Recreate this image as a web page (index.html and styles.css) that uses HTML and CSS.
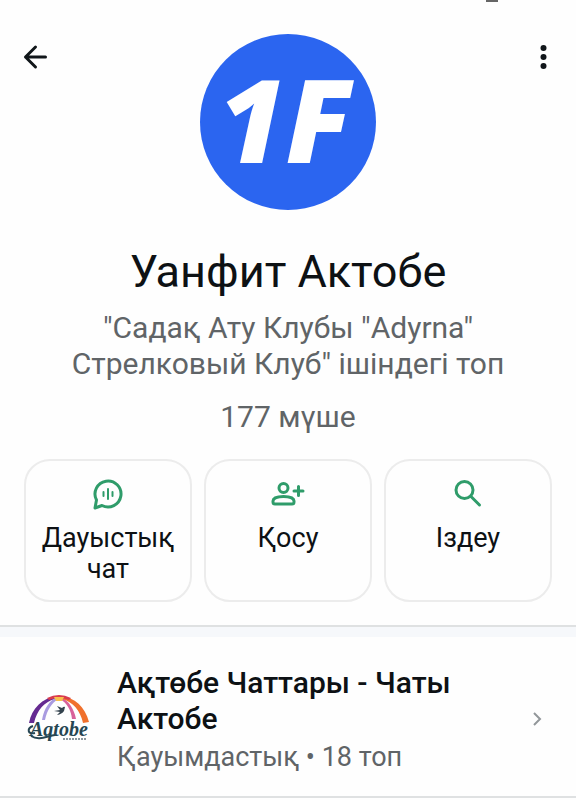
FILE: index.html
```
<!DOCTYPE html>
<html lang="kk">
<head>
<meta charset="UTF-8">
<meta name="viewport" content="width=device-width, initial-scale=1">
<title>Уанфит Актобе</title>
<link rel="stylesheet" href="styles.css">
</head>

<body>
  <!-- ============  Group info  ============ -->
  <section class="group">
    <header class="top-bar">
      <button type="button" class="icon-button" aria-label="Артқа">
        <svg width="28" height="28" viewBox="0 0 28 28" fill="none" stroke="#11161a" stroke-width="3" stroke-linecap="round" stroke-linejoin="round">
          <path d="M25.500 14H5.500M15.500 4L5.500 14l10 10"/>
        </svg>
      </button>

      <svg class="avatar" width="176" height="176" viewBox="0 0 176 176" role="img" aria-label="1F">
        <circle cx="88" cy="88" r="88" fill="#2b65f0"/>
        <text class="avatar-text" x="85" y="129" text-anchor="middle">1F</text>
      </svg>

      <button type="button" class="icon-button" aria-label="Мәзір">
        <svg width="28" height="28" viewBox="0 0 28 28" fill="#11161a">
          <circle cx="15.500" cy="5" r="3"/>
          <circle cx="15.500" cy="14" r="3"/>
          <circle cx="15.500" cy="23" r="3"/>
        </svg>
      </button>
    </header>

    <h1>Уанфит Актобе</h1>
    <p class="about">"Садақ Ату Клубы "Adyrna" Стрелковый Клуб" ішіндегі топ</p>
    <p class="members">177 мүше</p>

    <div class="actions">
      <button type="button" class="action">
        <svg width="34" height="34" viewBox="0 0 34 34" fill="none" stroke="#2f9c6a" stroke-width="3" stroke-linecap="round" stroke-linejoin="round">
          <path d="M4 31l1.500-8A13 13 0 1 1 11 28.500z"/>
          <path d="M12.500 15v4M17 12v10M21.500 15v4" stroke-width="2"/>
        </svg>
        <span>Дауыстық чат</span>
      </button>

      <button type="button" class="action">
        <svg width="34" height="34" viewBox="0 0 34 34" fill="none" stroke="#2f9c6a" stroke-width="3" stroke-linecap="round" stroke-linejoin="round">
          <circle cx="12.500" cy="11" r="4.500"/>
          <path d="M4 27q-2 0-2-2v-1c0-3 5-4.500 10.500-4.500S23 21 23 24v1q0 2-2 2z"/>
          <path d="M27.500 9.500v9M23 14h9"/>
        </svg>
        <span>Қосу</span>
      </button>

      <button type="button" class="action">
        <svg width="34" height="34" viewBox="0 0 34 34" fill="none" stroke="#2f9c6a" stroke-width="3" stroke-linecap="round">
          <circle cx="13.500" cy="13" r="8.500"/>
          <path d="M20 19.500l8.500 8.500"/>
        </svg>
        <span>Іздеу</span>
      </button>
    </div>
  </section>

  <!-- ============  Community link  ============ -->
  <a href="#" class="community">
    <svg class="community-logo" width="64" height="64" viewBox="0 0 64 64" role="img" aria-label="Aqtobe">
      <path d="M2 35C5 20 15 10 30 8l-2 3C17 14 10 22 7 35z" fill="#652a91"/>
      <path d="M15 32C17 20 23 12 30 9l1 2c-6 4-11 11-13 21z" fill="#a99be0"/>
      <path d="M34 9c8 4 13 12 15 22h-4c-1-9-5-16-12-20z" fill="#d8619a"/>
      <path d="M33 8c15 1 25 11 29 26l-6 1C53 22 46 14 35 11z" fill="#f0702c"/>
      <path d="M20 10q6-3 12-3t12 3l-2 2q-5-2-10-2t-10 2z" fill="#d93b4d"/>
      <path d="M27 9h10l-2 4h-6z" fill="#f8c04c"/>
      <path d="M27 23l6-1-3-4 5 2q2-2 3-1l-1 4q-2 3-7 4l3-3z" fill="#33424d"/>
      <text class="logo-name" x="3" y="48">Aqtobe</text>
      <path d="M6 38c-6 2-6 9 2 7M4 48c8 5 16 0 24-1" fill="none" stroke="#264653" stroke-width="2"/>
      <path d="M36 51h24" stroke="#8a979e" stroke-width="2" stroke-dasharray="2 1"/>
    </svg>
    <div class="community-info">
      <h2>Ақтөбе Чаттары - Чаты Актобе</h2>
      <p>Қауымдастық • 18 топ</p>
    </div>
    <svg width="16" height="16" viewBox="0 0 16 16" fill="none" stroke="#92979a" stroke-width="2">
      <path d="M5 1l6 6-6 6"/>
    </svg>
  </a>
</body>
</html>
```

FILE: styles.css
```
/* page layout */
*{ box-sizing:border-box }
body{
  margin:0;
  background:#fefefe;
  color:#0d1114;
  font-family:Roboto, "Noto Sans", sans-serif;
}
h1, h2, p{
  margin:0;
  font-weight:400;
}
button{
  border:0;
  padding:0;
  background:none;
  color:inherit;
  font:inherit;
  cursor:pointer;
}

/* group info */
.group{
  position:relative;
  padding:34px 24px 23px;
  border-bottom:2px solid #dfe1e2;
  text-align:center;
}
/* edge of the camera cutout */
.group::before{
  content:"";
  position:absolute;
  top:0;
  right:78px;
  width:12px;
  height:2px;
  background:#666;
}
.top-bar{
  display:flex;
  justify-content:space-between;
  align-items:flex-start;
}
.icon-button{
  width:28px;
  height:28px;
  margin:9px -4px 0;
}
.icon-button svg,
.avatar{
  display:block;
}
.avatar-text{
  fill:#fff;
  font-family:"Open Sans", sans-serif;
  font-size:116px;
  font-style:italic;
  font-weight:800;
}
h1{
  margin-top:36px;
  font-size:45px;
  line-height:52px;
}
.about,
.members{
  color:#606467;
  font-size:30px;
  line-height:36px;
}
.about{
  margin-top:12px;
  padding:0 32px;
}
.members{ margin-top:17px }

/* action buttons */
.actions{
  display:grid;
  grid-template-columns:repeat(3, 1fr);
  gap:12px;
  margin-top:24px;
}
.action{
  display:flex;
  flex-direction:column;
  align-items:center;
  min-height:143px;
  padding:16px 8px 15px;
  border:2px solid #ececec;
  border-radius:26px;
  font-size:27px;
  line-height:31px;
}
.action span{ margin-top:12px }

/* community link */
.community{
  display:flex;
  align-items:center;
  gap:26px;
  padding:28px 31px 21px 27px;
  border-top:10px solid #f6f8fb;
  border-bottom:2px solid #dfe1e2;
  color:inherit;
  text-decoration:none;
}
.community svg{ flex:none }
.community-info{ flex:1 }
.community h2{
  font-size:30px;
  font-weight:500;
  line-height:36px;
}
.community p{
  margin-top:2px;
  color:#606467;
  font-size:27px;
  line-height:36px;
}
.logo-name{
  fill:#264653;
  font-family:"Liberation Serif", serif;
  font-size:20px;
  font-style:italic;
  font-weight:700;
}
```
